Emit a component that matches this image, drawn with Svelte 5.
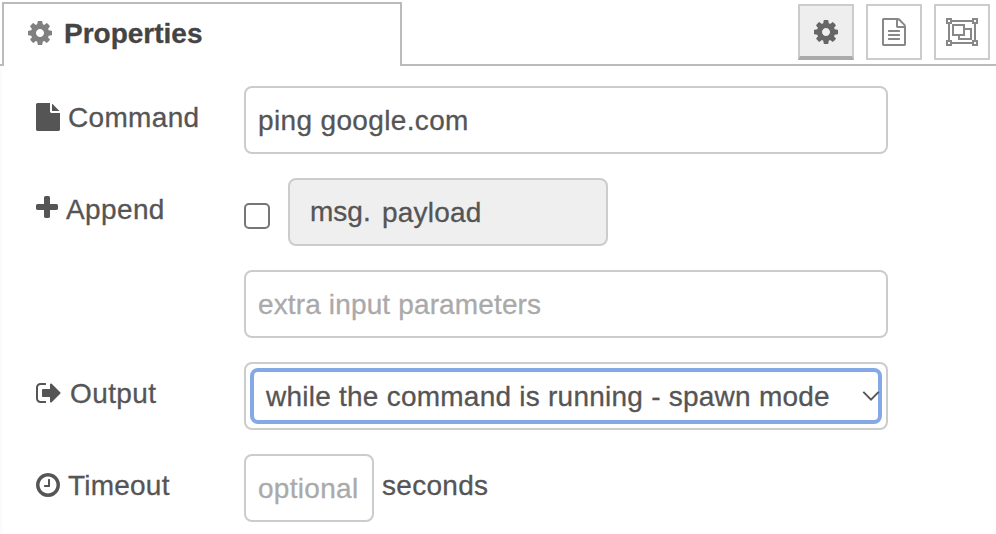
<script>
  const icons = {
    cog: 'M1152 896q0-106-75-181t-181-75-181 75-75 181 75 181 181 75 181-75 75-181zm512-109v222q0 12-8 23t-20 13l-185 28q-19 54-39 91 35 50 107 138 10 12 10 25t-9 23q-27 37-99 108t-94 71q-12 0-26-9l-138-108q-44 23-91 38-16 136-29 186-7 28-36 28h-222q-14 0-24.5-8.5t-11.5-21.5l-28-184q-49-16-90-37l-141 107q-10 9-25 9-14 0-25-11-126-114-165-168-7-10-7-23 0-12 8-23 15-21 51-66.5t54-70.5q-27-50-41-99l-183-27q-13-2-21-12.5t-8-23.5v-222q0-12 8-23t19-13l186-28q14-46 39-92-40-57-107-138-10-12-10-24 0-10 9-23 26-36 98.5-107.5t94.5-71.5q13 0 26 10l138 107q44-23 91-38 16-136 29-186 7-28 36-28h222q14 0 24.5 8.5t11.5 21.5l28 184q49 16 90 37l142-107q9-9 24-9 13 0 25 10 129 119 165 170 7 8 7 22 0 12-8 23-15 21-51 66.5t-54 70.5q26 50 41 98l183 28q13 2 21 12.5t8 23.5z',
    file: 'M1152 512v-472q22 14 36 28l408 408q14 14 28 36h-472zm-128 32q0 40 28 68t68 28h544v1056q0 40-28 68t-68 28h-1344q-40 0-68-28t-28-68v-1600q0-40 28-68t68-28h800v544z',
    plus: 'M1600 736v192q0 40-28 68t-68 28h-416v416q0 40-28 68t-68 28h-192q-40 0-68-28t-28-68v-416h-416q-40 0-68-28t-28-68v-192q0-40 28-68t68-28h416v-416q0-40 28-68t68-28h192q40 0 68 28t28 68v416h416q40 0 68 28t28 68z',
    signOut: 'M704 1440q0 4 1 20t.5 26.5-3 23.5-10 19.5-20.5 6.5h-320q-119 0-203.5-84.5t-84.5-203.5v-704q0-119 84.5-203.5t203.5-84.5h320q13 0 22.5 9.5t9.5 22.5q0 4 1 20t.5 26.5-3 23.5-10 19.5-20.5 6.5h-320q-66 0-113 47t-47 113v704q0 66 47 113t113 47h312l11.5 1 11.5 3 8 5.5 7 9 2 13.5zm928-544q0 26-19 45l-544 544q-19 19-45 19t-45-19-19-45v-288h-448q-26 0-45-19t-19-45v-384q0-26 19-45t45-19h448v-288q0-26 19-45t45-19 45 19l544 544q19 19 19 45z',
    clock: 'M1024 544v448q0 14-9 23t-23 9h-320q-14 0-23-9t-9-23v-64q0-14 9-23t23-9h224v-352q0-14 9-23t23-9h64q14 0 23 9t9 23zm416 352q0-148-73-273t-198-198-273-73-273 73-198 198-73 273 73 273 198 198 273 73 273-73 198-198 73-273zm224 0q0 209-103 385.5t-279.5 279.5-385.5 103-385.5-103-279.5-279.5-103-385.5 103-385.5 279.5-279.5 385.5-103 385.5 103 279.5 279.5 103 385.5z',
    fileText: 'M1596 380q28 28 48 76t20 88v1152q0 40-28 68t-68 28h-1344q-40 0-68-28t-28-68v-1600q0-40 28-68t68-28h896q40 0 88 20t76 48zm-444-244v376h376q-10-29-22-41l-313-313q-12-12-41-22zm384 1528v-1024h-416q-40 0-68-28t-28-68v-416h-768v1536h1280zm-1024-864q0-14 9-23t23-9h704q14 0 23 9t9 23v64q0 14-9 23t-23 9h-704q-14 0-23-9t-9-23v-64zm736 224q14 0 23 9t9 23v64q0 14-9 23t-23 9h-704q-14 0-23-9t-9-23v-64q0-14 9-23t23-9h704zm0 256q14 0 23 9t9 23v64q0 14-9 23t-23 9h-704q-14 0-23-9t-9-23v-64q0-14 9-23t23-9h704z'
  };
</script>

{#snippet icon(name)}
  <svg class="icon" width="28" height="28" viewBox="0 0 1792 1792" aria-hidden="true"><path d={icons[name]} /></svg>
{/snippet}

<div class="editor">
  <header>
    <div class="edge"></div>
    <div class="tab">{@render icon('cog')}<span>Properties</span></div>
    <div class="tools">
      <button class="tool active" aria-label="Properties">{@render icon('cog')}</button>
      <button class="tool" aria-label="Description">{@render icon('fileText')}</button>
      <button class="tool" aria-label="Appearance">
        <svg width="32" height="28" viewBox="0 0 32 28" fill="none" stroke="currentColor" stroke-width="2" aria-hidden="true">
          <path d="M6 3h20M6 25h20M3 6v16M29 6v16" />
          <path d="M1 1h4v4H1zM27 1h4v4h-4zM1 23h4v4H1zM27 23h4v4h-4z" />
          <path d="M7 7h11v10H7zM19 11h6v10H13v-4" />
        </svg>
      </button>
    </div>
  </header>

  <form>
    <div class="row">
      <div class="label">{@render icon('file')}<span class="command">Command</span></div>
      <div class="input wide"><span class="ping">ping google.com</span></div>
    </div>
    <div class="row">
      <div class="label plus">{@render icon('plus')}<span class="append">Append</span></div>
      <div class="check"></div>
      <div class="input typed"><span class="msg">msg.</span><span class="payload">payload</span></div>
    </div>
    <div class="row">
      <div class="label"></div>
      <div class="input wide hint"><span class="extra">extra input parameters</span></div>
    </div>
    <div class="row">
      <div class="label out">{@render icon('signOut')}<span class="output">Output</span></div>
      <div class="select">
        <div class="ring">
          <span class="mode">while the command is running - spawn mode</span>
          <svg class="chevron" width="18" height="12" viewBox="0 0 18 12" fill="none" stroke="#555" stroke-width="1.9" aria-hidden="true"><path d="M1.3 1.8 9 9.7l7.7-7.9" /></svg>
        </div>
      </div>
    </div>
    <div class="row">
      <div class="label">{@render icon('clock')}<span class="timeout">Timeout</span></div>
      <div class="input small hint"><span class="optional">optional</span></div>
      <div class="unit"><span class="seconds">seconds</span></div>
    </div>
  </form>
</div>

<style>
  :global(body) { margin: 0; background: #fff; }
  .editor {
    width: 996px;
    height: 534px;
    overflow: hidden;
    background: #fff;
    color: #555;
    font: 28px/40px "Liberation Sans", Arial, sans-serif;
    box-sizing: border-box;
  }
  .editor :global(*) { box-sizing: border-box; }
  span { white-space: pre; -webkit-text-stroke: 0.3px currentColor; }
  svg { display: block; flex: none; }
  .icon { fill: currentColor; }
  header { display: flex; height: 66px; }
  .edge { width: 2px; border-bottom: 2px solid #bbb; }
  .tab {
    width: 400px;
    height: 64px;
    margin-top: 2px;
    padding: 10px 0 0 22px;
    display: flex;
    align-items: flex-start;
    border: 2px solid #bbb;
    border-bottom: 0;
    font-weight: bold;
    color: #444;
  }
  .tab .icon { margin-top: 5px; fill: #808080; }
  .tab span { margin-left: 10px; }
  .tools {
    flex: 1;
    display: flex;
    justify-content: flex-end;
    gap: 12px;
    padding: 4px 6px 0 0;
    border-bottom: 2px solid #bbb;
  }
  .tool {
    width: 56px;
    height: 56px;
    padding: 0;
    margin: 0;
    display: flex;
    align-items: center;
    justify-content: center;
    border: 2px solid #ccc;
    background: #fff;
    color: #888;
  }
  .tool.active { padding-top: 2px; background: #eee; color: #666; border-bottom: 4px solid #aaa; }
  form {
    display: flex;
    flex-direction: column;
    gap: 24px;
    height: 468px;
    padding: 20px 0 0 32px;
    border-left: 2px solid #fbfbfb;
  }
  .row { display: flex; flex: none; height: 68px; }
  .label { width: 210px; padding-top: 12px; display: flex; align-items: flex-start; flex: none; }
  .label .icon { margin: 5px 6px 0 0; }
  .plus { margin-left: -1px; width: 211px; }
  .plus .icon { margin: 4px 5px 0 0; }
  .out { margin-left: 1px; width: 209px; }
  .command { letter-spacing: 0.33px; }
  .append { letter-spacing: 0.38px; }
  .output { margin-left: 1px; letter-spacing: 0.4px; }
  .timeout { letter-spacing: 0.22px; }
  .input {
    display: flex;
    align-items: center;
    border: 2px solid #ccc;
    border-radius: 8px;
    padding: 2px 0 0 12px;
    background: #fff;
  }
  .wide { width: 644px; }
  .small { width: 130px; }
  .hint { color: #aaa; }
  .ping { letter-spacing: 0.35px; }
  .extra { letter-spacing: 0.14px; }
  .optional { letter-spacing: 0.3px; }
  .check {
    width: 26px;
    height: 26px;
    margin: 25px 18px 0 0;
    border: 2px solid #767676;
    border-radius: 5px;
    background: #fff;
  }
  .typed { width: 320px; background: #efefef; padding-left: 20px; }
  .msg { margin-top: -2px; width: 72px; }
  .payload { letter-spacing: 0.2px; }
  .select { width: 644px; padding: 4px; border: 2px solid #ccc; border-radius: 8px; }
  .ring {
    height: 56px;
    display: flex;
    align-items: center;
    justify-content: space-between;
    border: 4px solid #84a9e6;
    border-radius: 8px;
    padding-left: 12px;
  }
  .mode { margin-top: 2px; letter-spacing: 0.24px; }
  .chevron { margin-right: -2px; }
  .unit { padding: 12px 0 0 8px; }
  .seconds { letter-spacing: 0.3px; }
</style>
